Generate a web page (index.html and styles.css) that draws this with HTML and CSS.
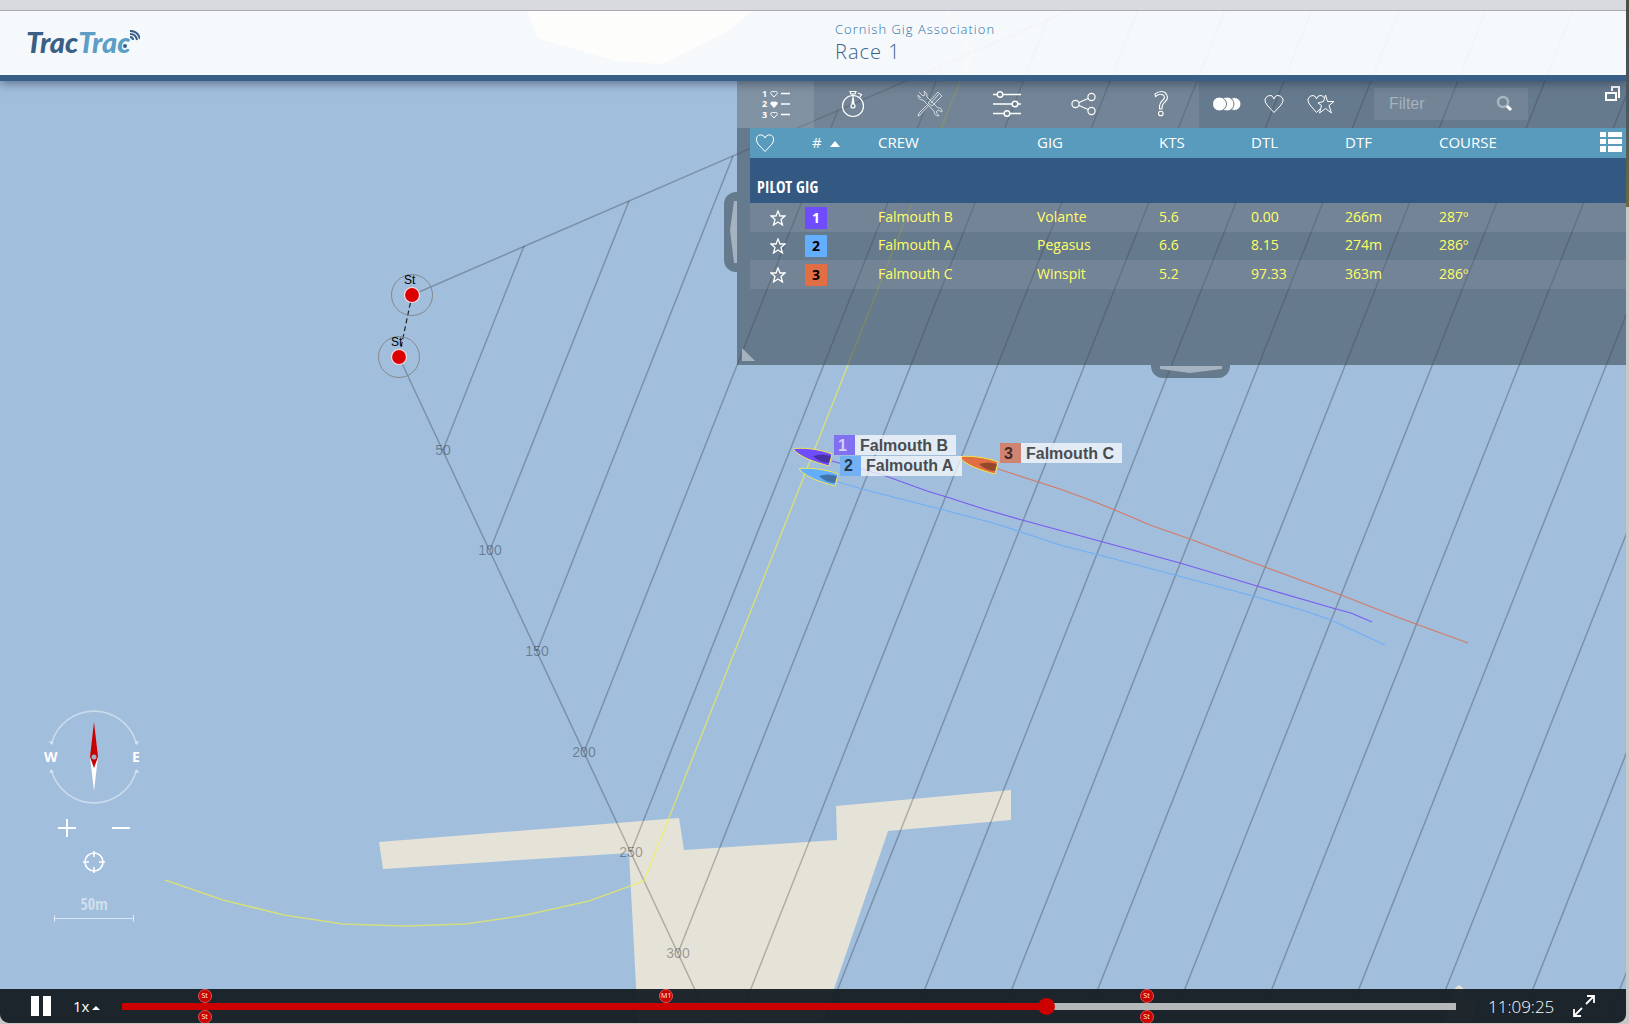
FILE: index.html
```html
<!DOCTYPE html>
<html lang="en">
<head>
<meta charset="utf-8">
<title>TracTrac - Race 1</title>
<link rel="stylesheet" href="styles.css">
</head>
<body>
<div class="chrome"></div>
<div class="viewer">
  <svg class="map" role="img" aria-label="Race map">
    <defs>
      <g id="boat">
        <path d="M0 1C7-1 27 1 39 6L36 18C22 14 8 10 0 1Z" fill="currentColor" stroke="#f2e94c" stroke-width="1"/>
        <path d="M20 8Q29 5 38 8L36 15Q27 15 20 8Z" fill="#000" fill-opacity=".34"/>
      </g>
      <g id="mark">
        <circle r="20.5" fill="none" stroke="#85898e"/>
        <circle r="7.5" fill="#dc0000" stroke="#f3dfe3" stroke-width="1.2"/>
      </g>
    </defs>
    <g transform="translate(0 -11)">
      <g class="land">
        <path d="M379 842L679 818L684 850L837 840L836 806L1011 790L1011 820L888 831L834 989L822 1024H638L629 853L383 869Z"/>
        <path d="M527 11L537 38L616 61L662 64L728 31L752 11Z"/>
        <path d="M1455 988L1459 985L1463 988L1465 998L1475 1003L1472 1024H1444L1450 1003Z"/>
      </g>
      <g class="grid-lines">
        <path d="M399 357L711 1024M412 295L1070 10"/>
        <path d="M443 450L524 246M490 550L629 201M537 651L733 156M584 752L838 110M631 852L942 66M678 953L1048 19"/>
        <path d="M737 1024L1142 0M824 1024L1229 0M911 1024L1316 0M998 1024L1403 0M1084 1024L1490 0M1171 1024L1577 0M1258 1024L1664 0M1345 1024L1751 0M1432 1024L1838 0M1519 1024L1925 0M1606 1024L2012 0"/>
      </g>
      <g class="distances">
        <text x="443" y="455">50</text>
        <text x="490" y="555">100</text>
        <text x="537" y="656">150</text>
        <text x="584" y="757">200</text>
        <text x="631" y="857">250</text>
        <text x="678" y="958">300</text>
      </g>
      <path class="leader-line" d="M946 11L972 53L960 81L842 380L644 881L589 901L526 915L466 924L404 926L343 924L284 915L223 900L165 880"/>
      <path class="start-line" d="M412 295L399 357"/>
      <use href="#mark" x="412" y="295"/>
      <use href="#mark" x="399" y="357"/>
      <g class="mark-names"><text x="404" y="284">St</text><text x="391" y="346">St</text></g>
      <g class="tracks">
        <path stroke="#7a5cf0" d="M832 461L883 475L927 491L950 498L987 510L1022 520L1103 542L1180 563L1257 586L1336 609L1351 613L1372 622"/>
        <path stroke="#70aff5" d="M838 482L862 489L940 509L993 523L1018 531L1060 545L1103 556L1175 575L1253 596L1302 610L1331 620L1385 645"/>
        <path stroke="#d37b66" d="M998 469L1060 489L1090 500L1115 510L1150 525L1190 539L1227 553L1265 567L1341 595L1397 617L1416 624L1468 643"/>
      </g>
      <use href="#boat" class="violet" x="793" y="448"/>
      <use href="#boat" class="azure" x="799" y="468"/>
      <use href="#boat" class="orange" x="959" y="456"/>
      <g class="boat-names">
        <rect x="834" y="435" width="122" height="20" class="plate"/><rect x="834" y="435" width="21" height="20" fill="#8170f0"/>
        <text x="838" y="451" fill="#d3cffa">1</text><text x="860" y="451">Falmouth B</text>
        <rect x="840" y="456" width="122" height="20" class="plate"/><rect x="840" y="456" width="21" height="20" fill="#74b1f4"/>
        <text x="844" y="471" fill="#253749">2</text><text x="866" y="471">Falmouth A</text>
        <rect x="1000" y="443" width="122" height="20" class="plate"/><rect x="1000" y="443" width="21" height="20" fill="#cf8370"/>
        <text x="1004" y="459" fill="#432c27">3</text><text x="1026" y="459">Falmouth C</text>
      </g>
    </g>
  </svg>

  <header class="topbar">
    <a class="logo" href="#" aria-label="TracTrac home"><span class="logo-dark">Trac</span><span class="logo-light">Trac</span>
      <svg width="20" height="32" viewBox="0 0 20 32" fill="none" stroke="#3a5f87" stroke-width="2">
        <circle cx="5" cy="20" r="2" fill="#3a5f87" stroke="none"/>
        <path d="M10 11q3 0 3 3M10 8q6 0 7 6M10 5q8 0 10 8"/>
      </svg>
    </a>
    <div class="titles">
      <p class="event">Cornish Gig Association</p>
      <h1>Race 1</h1>
    </div>
  </header>

  <main class="stage">
    <section class="navigator" aria-label="Map navigation">
      <svg class="compass" width="94" height="90" viewBox="0 0 94 90">
        <g fill="none" stroke="#fff" stroke-opacity=".45" stroke-width="1.6">
          <path d="M5 30A44 44 0 0 1 89 30M5 60A44 44 0 0 0 89 60"/>
        </g>
        <path fill="#fff" fill-opacity=".55" d="M2 29L7 30L4 33ZM92 29L87 30L90 33ZM2 61L7 60L4 57ZM92 61L87 60L90 57Z"/>
        <path fill="#fff" d="M43 45H51L47 79Z"/>
        <path fill="#cb0000" d="M47 10L51 45L47 56L43 45Z"/>
        <circle cx="47" cy="45" r="2.5" fill="#9fb0cc"/>
        <text x="-3" y="50">W</text><text x="85" y="50">E</text>
      </svg>
      <div class="zoom">
        <button aria-label="Zoom in"><svg width="18" height="18" viewBox="0 0 18 18"><path d="M0 9H18M9 0V18" stroke="#fff" stroke-width="2"/></svg></button>
        <button aria-label="Zoom out"><svg width="18" height="18" viewBox="0 0 18 18"><path d="M0 9H18" stroke="#fff" stroke-width="2"/></svg></button>
      </div>
      <button aria-label="Centre map"><svg width="22" height="22" viewBox="0 0 22 22" fill="none" stroke="#fff" stroke-width="1.6"><circle cx="11" cy="11" r="9"/><path d="M11 0V6M11 16V22M0 11H6M16 11H22"/></svg></button>
      <p class="scale">50m</p>
      <svg width="80" height="8" viewBox="0 0 80 8" stroke="#fff" stroke-opacity=".6"><path d="M.5 0V7M79.500 0V7M0 3.500H80"/></svg>
    </section>

    <section class="panel" aria-label="Leaderboard">
      <div class="toolbar">
        <button class="tab active" aria-label="Leaderboard">
          <svg width="30" height="30" viewBox="0 0 30 30" stroke="#fff" fill="none">
            <path d="M20 4.500H29M20 15H29M20 25.500H29" stroke-width="1.300"/>
            <path d="M13 8L9.800 4.500Q9.500 1.500 13 2.800Q16.500 1.500 16.200 4.500Z"/>
            <path d="M13 18.500L9.800 15Q9.500 12 13 13.300Q16.500 12 16.200 15Z" fill="#fff"/>
            <path d="M13 29L9.800 25.500Q9.500 22.500 13 23.800Q16.500 22.500 16.200 25.500Z"/>
            <g class="ranks"><text x="1" y="8">1</text><text x="1" y="18">2</text><text x="1" y="29">3</text></g>
          </svg>
        </button>
        <button class="tab" aria-label="Timing">
          <svg width="30" height="30" viewBox="0 0 30 30" stroke="#fff" fill="none" stroke-width="1.200"><circle cx="15" cy="17" r="10.500"/><path d="M12 2.500H18L17 5H13ZM15 5V15M14 15L15 8L16 15M20 4L23.500 5.500L22 8"/><circle cx="15" cy="17" r="2"/></svg>
        </button>
        <button class="tab" aria-label="Tools">
          <svg width="30" height="30" viewBox="0 0 30 30" stroke="#e8edf2" fill="none" stroke-width=".8"><path d="M23 3L27 7L17 17L13 14ZM24 5L16 14M14 16L5 26L3 27L4 24L13 15"/><path d="M4 3L8 7L10 6L9 2Q13 4 12 8L23 19Q27 18 27 23L23 21L21 23L24 27Q19 27 19 22L8 11Q3 11 3 6L6 9"/></svg>
        </button>
        <button class="tab" aria-label="Settings">
          <svg width="30" height="30" viewBox="0 0 30 30" stroke="#fff" fill="none" stroke-width="1.400"><path d="M1 5.500H5M11 5.500H29M1 15H20M26 15H29M1 24.500H12M18 24.500H29"/><circle cx="8" cy="5.500" r="2.800"/><circle cx="23" cy="15" r="2.800"/><circle cx="15" cy="24.500" r="2.800"/></svg>
        </button>
        <button class="tab" aria-label="Share">
          <svg width="30" height="30" viewBox="0 0 30 30" stroke="#fff" fill="none" stroke-width="1.200"><circle cx="6.500" cy="15" r="3.600"/><circle cx="22.500" cy="8" r="3.600"/><circle cx="22.500" cy="22" r="3.600"/><path d="M10 13.500L19 9.500M10 16.500L19 20.500"/></svg>
        </button>
        <button class="tab" aria-label="Help">
          <svg width="30" height="30" viewBox="0 0 30 30" stroke="#fff" fill="none" stroke-width="1.100"><path d="M9 5Q14 1 19 3.500Q24 8 19 13Q16 15 16 20H13.500Q13 14 17 11Q20 8 17 6Q14 4 9.500 7.500Z"/><circle cx="14.800" cy="24.500" r="2.300"/></svg>
        </button>
        <div class="filters">
          <button aria-label="All boats"><svg width="28" height="14" viewBox="0 0 28 14" fill="#fff" stroke="#677a8f"><circle cx="21.500" cy="7" r="6.500"/><circle cx="14" cy="7" r="7"/><circle cx="6.500" cy="7" r="7"/></svg></button>
          <button aria-label="Favourites"><svg width="20" height="20" viewBox="0 0 20 20" fill="none" stroke="#fff"><path d="M10 18.500L3 11Q.5 8 1 5Q3 .8 7 1.500Q9 2 10 5Q11 2 13 1.500Q17 .8 19 5Q19.500 8 17 11Z"/></svg></button>
          <button aria-label="Favourites and starred"><svg width="28" height="20" viewBox="0 0 28 20" fill="none" stroke="#fff"><path d="M9.500 18.500L3 11Q.5 8 1 5Q3 1 6 1.500Q9 2 9.500 5Q10 2 13 1.500Q15 1 17 3.500M9.500 18.500L13 15"/><path d="M18.500 1L20.500 7.500H27L22 11.500L24.500 19L18.500 14.500L12.500 19L14.500 11.500L11 9L16.500 7.500Z"/></svg></button>
          <label class="search"><input type="text" placeholder="Filter" aria-label="Filter crews"><svg width="18" height="18" viewBox="0 0 18 18" fill="none"><circle cx="7" cy="7" r="5" stroke="#a9b6c2" stroke-width="2.400"/><path d="M11 11L15 15" stroke="#fff" stroke-width="3"/></svg></label>
          <button class="popout" aria-label="Detach panel"><svg width="16" height="16" viewBox="0 0 16 16" fill="none" stroke="#fff" stroke-width="2"><path d="M1 7H11V14H1Z"/><path d="M7 5V1H14V11H13"/></svg></button>
        </div>
      </div>
      <table class="board">
        <colgroup><col class="c-star"><col class="c-rank"><col class="c-crew"><col class="c-gig"><col class="c-kts"><col class="c-dist"><col class="c-dist"><col></colgroup>
        <thead>
          <tr>
            <th class="fav"><svg width="20" height="20" viewBox="0 0 20 20" fill="none" stroke="#fff"><path d="M10 18.500L3 11Q1 8 1.500 5Q3 1.300 7 2Q9 2.500 10 5Q11 2.500 13 2Q17 1.300 18.500 5Q19 8 17 11Z"/></svg></th>
            <th class="rank"># <i class="asc"></i></th><th>CREW</th><th>GIG</th><th>KTS</th><th>DTL</th><th>DTF</th>
            <th><div class="last"><span>COURSE</span><button aria-label="Columns"><svg width="22" height="20" viewBox="0 0 22 20" fill="#fff"><path d="M0 0H6V5H0ZM8 0H22V5H8ZM0 7H6V12H0ZM8 7H22V12H8ZM0 14H6V20H0ZM8 14H22V20H8Z"/></svg></button></div></th>
          </tr>
          <tr class="group"><th colspan="8">PILOT GIG</th></tr>
        </thead>
        <tbody>
          <tr><td class="star"><svg width="16" height="16" viewBox="0 0 16 16"><path d="M8 1L10 6H15L11 9.500L12.500 15L8 12L3.500 15L5 9.500L1 6H6Z"/></svg></td><td><span class="badge b1">1</span></td><td>Falmouth B</td><td>Volante</td><td>5.6</td><td>0.00</td><td>266m</td><td>287º</td></tr>
          <tr><td class="star"><svg width="16" height="16" viewBox="0 0 16 16"><path d="M8 1L10 6H15L11 9.500L12.500 15L8 12L3.500 15L5 9.500L1 6H6Z"/></svg></td><td><span class="badge b2">2</span></td><td>Falmouth A</td><td>Pegasus</td><td>6.6</td><td>8.15</td><td>274m</td><td>286º</td></tr>
          <tr><td class="star"><svg width="16" height="16" viewBox="0 0 16 16"><path d="M8 1L10 6H15L11 9.500L12.500 15L8 12L3.500 15L5 9.500L1 6H6Z"/></svg></td><td><span class="badge b3">3</span></td><td>Falmouth C</td><td>Winspit</td><td>5.2</td><td>97.33</td><td>363m</td><td>286º</td></tr>
        </tbody>
      </table>
      <svg class="resize" width="13" height="13" viewBox="0 0 13 13"><path d="M0 0V13H13Z" fill="#a5b2bf"/></svg>
      <button class="handle side" aria-label="Collapse sideways"><svg width="7" height="62" viewBox="0 0 7 62"><path d="M4 0H7V62H4L0 29Z" fill="#a5b2bf"/></svg></button>
      <button class="handle foot" aria-label="Collapse upwards"><svg width="62" height="7" viewBox="0 0 62 7"><path d="M0 0H62V3L30 7L0 3Z" fill="#a5b2bf"/></svg></button>
    </section>
  </main>

  <footer class="player">
    <button aria-label="Pause"><svg width="20" height="20" viewBox="0 0 20 20" fill="#fff"><path d="M0 0H8V20H0ZM12 0H20V20H12Z"/></svg></button>
    <button class="speed">1x<i class="asc small"></i></button>
    <div class="timeline">
      <input type="range" min="0" max="1333" value="927" aria-label="Race time">
      <span class="pin up" style="left:6.200%">St</span><span class="pin down" style="left:6.200%">St</span>
      <span class="pin up" style="left:40.800%">M1</span>
      <span class="pin up" style="left:76.800%">St</span><span class="pin down" style="left:76.800%">St</span>
    </div>
    <time>11:09:25</time>
    <button aria-label="Full screen"><svg width="22" height="22" viewBox="0 0 22 22" fill="none" stroke="#fff" stroke-width="1.800"><path d="M13 9L21 1M14 1H21V8M9 13L1 21M1 14V21H8"/></svg></button>
  </footer>
</div>
</body>
</html>
```
FILE: styles.css
```css
* { box-sizing: border-box; }
body {
  margin: 0;
  min-height: 100vh;
  display: flex;
  flex-direction: column;
  font-family: "Open Sans", sans-serif;
  background: linear-gradient(#4a4f3e 0, #4a5560 100px, #6b6a3f 207px, #c9c6c4 207px);
}
button { padding: 0; border: 0; background: none; color: inherit; font: inherit; cursor: pointer; }
svg { display: block; }
p, h1 { margin: 0; }

.chrome { height: 11px; margin-right: 3px; background: #d9dae0; border-bottom: 1px solid #a9a9b1; }
.viewer {
  position: relative;
  flex: 1;
  display: flex;
  flex-direction: column;
  margin: 0 3px 1px 0;
  border-radius: 0 0 9px 9px;
  overflow: hidden;
  background: #a1bedd;
}
.map { position: absolute; inset: 0; width: 100%; height: 100%; }
.land { fill: #e5e3d8; }
.grid-lines { fill: none; stroke: #000; stroke-opacity: .24; stroke-width: 1.5; }
.distances { font: 14px "Liberation Sans", sans-serif; fill: #000; fill-opacity: .35; text-anchor: middle; }
.leader-line { fill: none; stroke: #f0f050; stroke-opacity: .65; stroke-width: 1.5; }
.start-line { stroke: #222; stroke-width: 1.2; stroke-dasharray: 5 3; }
.mark-names { font: 12px "Liberation Sans", sans-serif; }
.tracks { fill: none; stroke-width: 1.2; }
.violet { color: #704cff; }
.azure { color: #64aeff; }
.orange { color: #e16f43; }
.boat-names { font: bold 16px "Liberation Sans", sans-serif; fill: #4a4d50; }
.plate { fill: #fff; fill-opacity: .7; }

.topbar {
  position: relative;
  z-index: 2;
  height: 70px;
  display: grid;
  grid-template-columns: calc(50% + 22px) 1fr;
  background: rgba(255, 255, 255, .9);
  background-clip: padding-box;
  border-bottom: 6px solid #3a5f87;
  box-shadow: 0 2px 10px rgba(30, 40, 60, .55);
}
.logo {
  display: flex;
  padding: 15px 0 0 26px;
  font: italic 900 29px/32px Lato, sans-serif;
  text-decoration: none;
}
.logo-dark { color: #3a5f87; }
.logo-light { color: #5b9fc6; }
.logo svg { margin-left: -10px; }
.titles { padding-top: 9px; }
.event { font-size: 13px; line-height: 18px; font-weight: 300; letter-spacing: 1px; color: #2f6fa8; }
h1 { font-size: 20px; line-height: 28px; font-weight: 300; letter-spacing: 1px; color: #3a5f87; }

.stage { position: relative; flex: 1; display: flex; justify-content: space-between; }
.navigator {
  align-self: flex-end;
  width: 94px;
  margin: 0 0 66px 47px;
  display: flex;
  flex-direction: column;
  align-items: center;
}
.compass { overflow: visible; font: bold 14px "Open Sans", sans-serif; fill: #fff; }
.zoom { display: flex; gap: 36px; margin: 17px 0 14px; }
.scale { margin: 21px 0 1px; font: bold 16px/20px "Open Sans Condensed", "Liberation Sans Narrow", "Open Sans", sans-serif; color: rgba(255, 255, 255, .5); }

.panel {
  position: relative;
  align-self: flex-start;
  width: calc(50% + 76px);
  min-height: 284px;
  background: rgba(64, 77, 90, .6);
}
.toolbar { display: flex; height: 47px; }
.tab {
  width: 77px;
  padding-bottom: 2px;
  display: flex;
  align-items: center;
  justify-content: center;
  background: rgba(255, 255, 255, .08);
}
.tab.active { background: rgba(255, 255, 255, .18); }
.tab svg { overflow: visible; }
.ranks { font: bold 9px "Open Sans", sans-serif; fill: #fff; stroke: none; }
.filters { flex: 1; display: flex; align-items: center; padding: 0 0 2px 14px; gap: 23px; }
.search {
  display: flex;
  align-items: center;
  width: 154px;
  height: 32px;
  margin-left: 16px;
  padding: 0 14px 0 15px;
  background: rgba(255, 255, 255, .08);
}
.search input {
  flex: 1;
  min-width: 0;
  padding: 0;
  border: 0;
  outline: 0;
  background: none;
  color: #fff;
  font: 16px "Liberation Sans", sans-serif;
}
.search input::placeholder { color: #a5b2bf; opacity: 1; }
.popout { align-self: flex-start; margin: 5px 5px 0 auto; }

.board {
  width: calc(100% - 13px);
  margin-left: 13px;
  table-layout: fixed;
  border-collapse: collapse;
  font-size: 14px;
  color: #ffff66;
}
.c-star { width: 55px; }
.c-rank { width: 73px; }
.c-crew { width: 159px; }
.c-gig { width: 122px; }
.c-kts { width: 92px; }
.c-dist { width: 94px; }
.board th, .board td { padding: 0 0 2px; text-align: left; }
.board thead { color: #fff; font-size: 15px; }
.board th { height: 30px; background: #589bbd; font-weight: 400; }
.board .fav { padding: 0 0 0 5px; }
.board .rank { padding-left: 7px; }
.asc {
  display: inline-block;
  margin: 0 0 1px 4px;
  border: 5px solid transparent;
  border-top: 0;
  border-bottom: 6px solid #fff;
}
.asc.small { margin: 3px 0 0 3px; border-width: 0 4px 4px; }
.last { display: flex; align-items: center; justify-content: space-between; padding-right: 4px; }
.board .group th {
  height: 45px;
  padding: 12px 0 0 7px;
  background: #335881;
  font: bold 16px "Open Sans Condensed", "Liberation Sans Narrow", "Open Sans", sans-serif;
}
.board td { height: 28px; font-weight: 500; line-height: 20px; }
.board tbody tr:nth-child(odd) { background: rgba(255, 255, 255, .08); }
.board tbody tr:nth-child(odd) td { height: 29px; }
.board .star { padding: 0 0 0 20px; }
.star svg { fill: none; stroke: #fff; stroke-width: 1.3; }
.badge {
  display: block;
  width: 22px;
  height: 22px;
  font: bold 14px/22px "Open Sans", sans-serif;
  text-align: center;
  color: #000;
}
.board td:nth-child(2) { padding: 0; }
.b1 { background: #704cff; color: #fff; }
.b2 { background: #64aeff; }
.b3 { background: #e16f43; }

.resize { position: absolute; left: 5px; bottom: 4px; }
.handle { position: absolute; background: rgba(64, 77, 90, .6); display: flex; }
.handle.side { left: -13px; top: 111px; width: 13px; height: 80px; border-radius: 12px 0 0 12px; align-items: center; justify-content: flex-end; }
.handle.foot { left: 414px; bottom: -13px; width: 79px; height: 13px; border-radius: 0 0 12px 12px; align-items: flex-start; justify-content: center; padding-top: 1px; }

.player {
  position: relative;
  z-index: 1;
  height: 34px;
  display: flex;
  align-items: center;
  padding: 0 31px;
  background: rgba(24, 32, 38, .97);
  color: #fff;
}
.speed { margin-left: 22px; width: 49px; display: flex; align-items: center; font-size: 15px; line-height: 20px; }
.timeline { position: relative; flex: 1; }
.timeline input {
  display: block;
  width: 100%;
  height: 17px;
  margin: 0;
  appearance: none;
  background: linear-gradient(90deg, #cd0000 69.300%, #b5b9ba 0) center / 100% 7px no-repeat;
}
.timeline input::-webkit-slider-thumb { appearance: none; width: 17px; height: 17px; border-radius: 50%; background: #cd0000; }
.pin {
  position: absolute;
  width: 14px;
  height: 14px;
  margin-left: -7px;
  border: 1px solid #dd5555;
  border-radius: 50%;
  background: #cd0000;
  font-size: 7px;
  line-height: 12px;
  text-align: center;
}
.pin.up { top: -9px; }
.pin.down { top: 12px; }
time { width: 71px; margin: 0 14px 0 32px; font-size: 17px; font-weight: 300; }
```
